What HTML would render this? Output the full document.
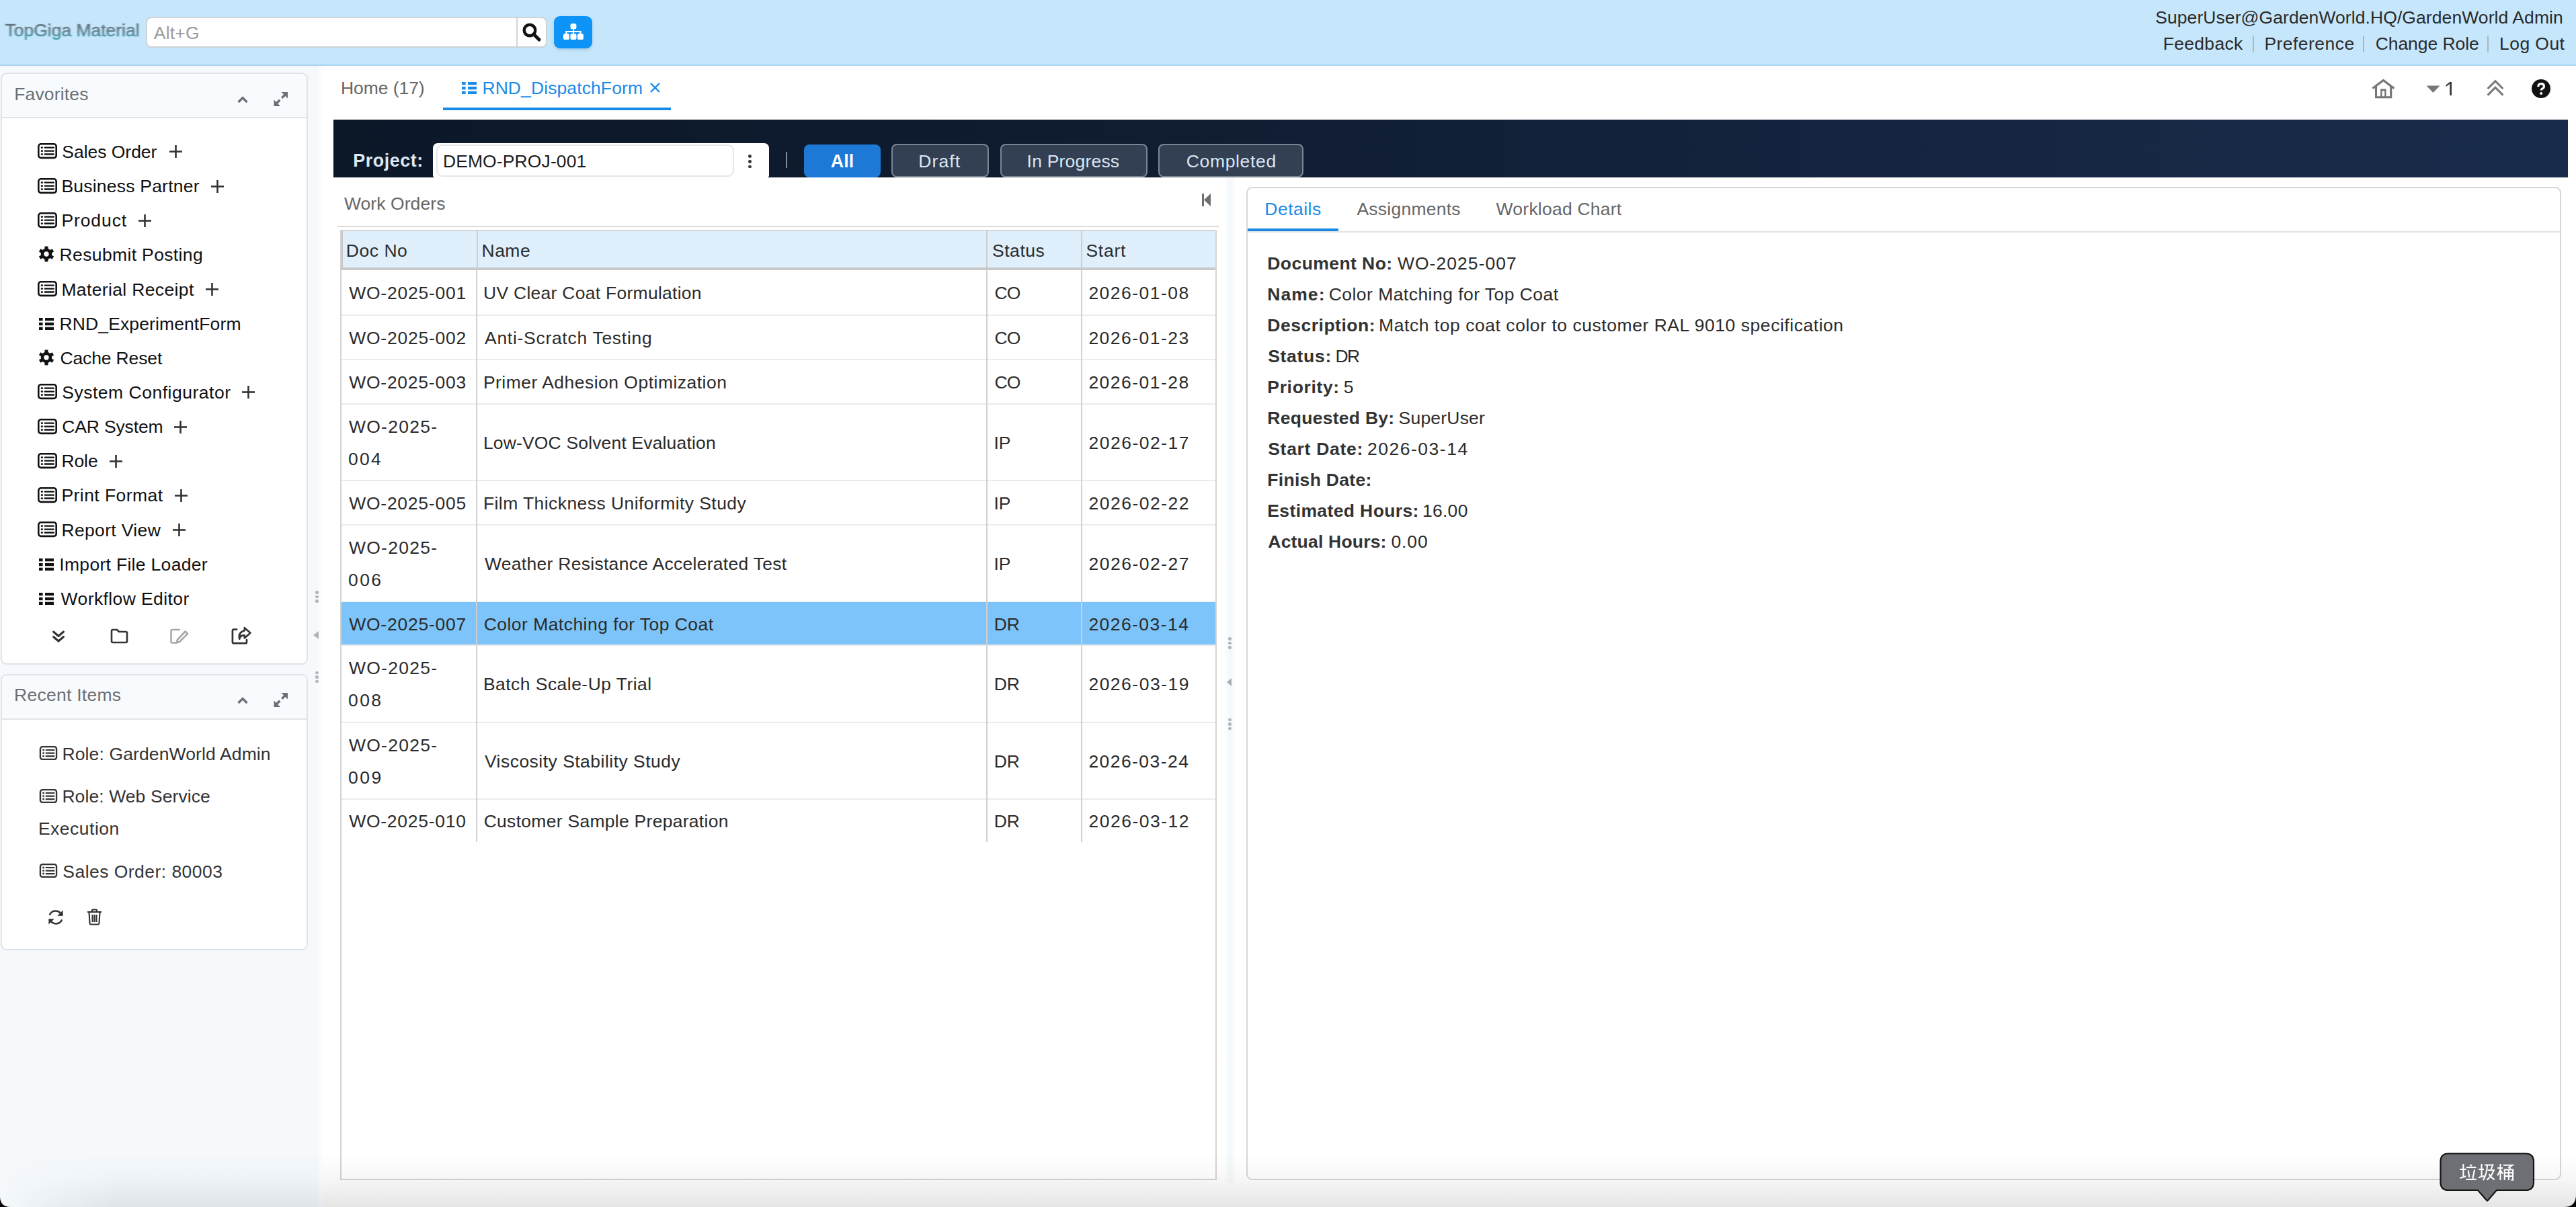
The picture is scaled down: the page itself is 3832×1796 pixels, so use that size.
<!DOCTYPE html><html><head><meta charset="utf-8"><style>
html,body{margin:0;padding:0;width:3832px;height:1796px;overflow:hidden;background:#fff;position:relative}
body{font-family:"Liberation Sans",sans-serif}
.t{position:absolute;line-height:1;white-space:nowrap}
</style></head><body>
<div style="position:absolute;left:0px;top:0px;width:3832px;height:96px;background:#c6e7fb"></div>
<div style="position:absolute;left:0px;top:96px;width:3832px;height:2px;background:#a9d5f4"></div>
<svg style="position:absolute;left:0;top:20px" width="216" height="50" viewBox="0 20 216 50"><defs><linearGradient id="lg" x1="0" y1="0" x2="0" y2="1"><stop offset="0" stop-color="#5e666b"/><stop offset="0.5" stop-color="#587680"/><stop offset="1" stop-color="#3aa0b4"/></linearGradient><filter id="bl" x="-5%" y="-30%" width="110%" height="160%"><feGaussianBlur stdDeviation="0.9 0.7"/></filter></defs><text x="7.6" y="54.3" font-family="Liberation Sans" font-size="25.6" font-weight="normal" fill="url(#lg)" stroke="url(#lg)" stroke-width="0.55" textLength="200" lengthAdjust="spacingAndGlyphs" filter="url(#bl)" opacity="0.95">TopGiga Material</text></svg>
<div style="position:absolute;left:217px;top:25px;width:597px;height:46px;box-sizing:border-box;border:2px solid #cdd2d6;border-radius:8px;background:#fff"></div>
<div style="position:absolute;left:768px;top:27px;width:2px;height:42px;background:#d4d4d4"></div>
<div class="t" style="left:228.8px;top:35.5px;font-size:26.5px;color:#9b9b9b;font-weight:normal;letter-spacing:0.19px;">Alt+G</div>
<svg style="position:absolute;left:776px;top:33px;" width="30" height="30" viewBox="0 0 30 30"><circle cx="12" cy="12" r="8.3" fill="none" stroke="#111" stroke-width="4.4"/><line x1="18" y1="18" x2="26" y2="26" stroke="#111" stroke-width="5" stroke-linecap="round"/></svg>
<div style="position:absolute;left:824px;top:24px;width:57px;height:48px;border-radius:9px;background:#0e93f6;box-shadow:0 2px 5px rgba(0,60,120,.18)"></div>
<svg style="position:absolute;left:838px;top:35px;" width="30" height="25" viewBox="0 0 30 25"><g fill="#fff"><rect x="10.6" y="0" width="8.8" height="8.3" rx="2.6"/><rect x="14" y="7" width="2" height="5"/><rect x="3.5" y="11" width="23" height="2"/><rect x="3.5" y="11" width="2" height="5"/><rect x="14" y="11" width="2" height="5"/><rect x="24.5" y="11" width="2" height="5"/><rect x="0" y="15" width="9" height="9" rx="2.6"/><rect x="10.5" y="15" width="9" height="9" rx="2.6"/><rect x="21" y="15" width="9" height="9" rx="2.6"/></g></svg>
<div class="t" style="left:3206.2px;top:13.0px;font-size:26.5px;color:#2a2a2a;font-weight:normal;letter-spacing:0.08px;">SuperUser@GardenWorld.HQ/GardenWorld Admin</div>
<div class="t" style="left:3217.7px;top:52.3px;font-size:26.5px;color:#2a2a2a;font-weight:normal;letter-spacing:0.31px;">Feedback</div>
<div class="t" style="left:3368.4px;top:52.3px;font-size:26.5px;color:#2a2a2a;font-weight:normal;letter-spacing:0.46px;">Preference</div>
<div class="t" style="left:3533.7px;top:52.3px;font-size:26.5px;color:#2a2a2a;font-weight:normal;letter-spacing:-0.06px;">Change Role</div>
<div class="t" style="left:3718.1px;top:52.3px;font-size:26.5px;color:#2a2a2a;font-weight:normal;letter-spacing:0.42px;">Log Out</div>
<div style="position:absolute;left:3350.8px;top:53px;width:2.0px;height:25px;background:#aeb6bd"></div>
<div style="position:absolute;left:3514.9px;top:53px;width:2.0px;height:25px;background:#aeb6bd"></div>
<div style="position:absolute;left:3700px;top:53px;width:2px;height:25px;background:#aeb6bd"></div>
<div style="position:absolute;left:0px;top:98px;width:481px;height:1698px;background:linear-gradient(90deg,#f5f9fc 0px,#f5f9fc 470px,#fafcfe 476px,#fff 482px)"></div>
<div style="position:absolute;left:1px;top:108px;width:457px;height:881px;box-sizing:border-box;border:2px solid #dfe3e7;border-radius:9px;background:#fff;overflow:hidden"><div style="height:64px;background:#f8fbfd;border-bottom:2px solid #e1e5e8"></div></div>
<div class="t" style="left:21.2px;top:127.1px;font-size:26.5px;color:#6b6f73;font-weight:normal;letter-spacing:0.17px;">Favorites</div>
<svg style="position:absolute;left:352px;top:140px;" width="18" height="16" viewBox="0 0 18 16"><polyline points="2.5,12 9,5.5 15.5,12" fill="none" stroke="#6b6f73" stroke-width="3.3"/></svg>
<svg style="position:absolute;left:407px;top:137px;" width="21" height="21" viewBox="0 0 21 21"><g fill="#6b6f73"><polygon points="21,0 21,9.5 11.5,0"/><polygon points="0.5,21 10,21 0.5,11.5"/></g><g stroke="#6b6f73" stroke-width="3.4"><line x1="17" y1="4" x2="12.2" y2="8.8"/><line x1="4.5" y1="16.5" x2="9.3" y2="11.7"/></g></svg>
<svg style="position:absolute;left:56px;top:213px;" width="29" height="24" viewBox="0 0 29 24"><rect x="1.3" y="1.3" width="26.4" height="20.6" rx="3.6" fill="none" stroke="#111" stroke-width="2.6"/><g fill="#111"><circle cx="6.4" cy="6.6" r="1.6"/><circle cx="6.4" cy="11.6" r="1.6"/><circle cx="6.4" cy="16.5" r="1.6"/></g><g stroke="#111" stroke-width="2.4" stroke-linecap="round"><line x1="10.8" y1="6.6" x2="23.8" y2="6.6"/><line x1="10.8" y1="11.6" x2="23.8" y2="11.6"/><line x1="10.8" y1="16.5" x2="23.8" y2="16.5"/></g></svg>
<div class="t" style="left:92.3px;top:212.9px;font-size:26.5px;color:#111;font-weight:normal;letter-spacing:-0.03px;">Sales Order</div>
<svg style="position:absolute;left:252px;top:216px;" width="19" height="19" viewBox="0 0 19 19"><g stroke="#333" stroke-width="2.6"><line x1="9.5" y1="0" x2="9.5" y2="19"/><line x1="0" y1="9.5" x2="19" y2="9.5"/></g></svg>
<svg style="position:absolute;left:56px;top:265px;" width="29" height="24" viewBox="0 0 29 24"><rect x="1.3" y="1.3" width="26.4" height="20.6" rx="3.6" fill="none" stroke="#111" stroke-width="2.6"/><g fill="#111"><circle cx="6.4" cy="6.6" r="1.6"/><circle cx="6.4" cy="11.6" r="1.6"/><circle cx="6.4" cy="16.5" r="1.6"/></g><g stroke="#111" stroke-width="2.4" stroke-linecap="round"><line x1="10.8" y1="6.6" x2="23.8" y2="6.6"/><line x1="10.8" y1="11.6" x2="23.8" y2="11.6"/><line x1="10.8" y1="16.5" x2="23.8" y2="16.5"/></g></svg>
<div class="t" style="left:91.4px;top:264.0px;font-size:26.5px;color:#111;font-weight:normal;letter-spacing:0.22px;">Business Partner</div>
<svg style="position:absolute;left:314px;top:268px;" width="19" height="19" viewBox="0 0 19 19"><g stroke="#333" stroke-width="2.6"><line x1="9.5" y1="0" x2="9.5" y2="19"/><line x1="0" y1="9.5" x2="19" y2="9.5"/></g></svg>
<svg style="position:absolute;left:56px;top:316px;" width="29" height="24" viewBox="0 0 29 24"><rect x="1.3" y="1.3" width="26.4" height="20.6" rx="3.6" fill="none" stroke="#111" stroke-width="2.6"/><g fill="#111"><circle cx="6.4" cy="6.6" r="1.6"/><circle cx="6.4" cy="11.6" r="1.6"/><circle cx="6.4" cy="16.5" r="1.6"/></g><g stroke="#111" stroke-width="2.4" stroke-linecap="round"><line x1="10.8" y1="6.6" x2="23.8" y2="6.6"/><line x1="10.8" y1="11.6" x2="23.8" y2="11.6"/><line x1="10.8" y1="16.5" x2="23.8" y2="16.5"/></g></svg>
<div class="t" style="left:91.4px;top:315.2px;font-size:26.5px;color:#111;font-weight:normal;letter-spacing:0.91px;">Product</div>
<svg style="position:absolute;left:206px;top:319px;" width="19" height="19" viewBox="0 0 19 19"><g stroke="#333" stroke-width="2.6"><line x1="9.5" y1="0" x2="9.5" y2="19"/><line x1="0" y1="9.5" x2="19" y2="9.5"/></g></svg>
<svg style="position:absolute;left:57px;top:366px;" width="24" height="24" viewBox="0 0 24 24"><circle cx="12" cy="12" r="8.3" fill="#111"/><rect x="9.5" y="0.5999999999999996" width="5" height="6" fill="#111" transform="rotate(0 12 12)"/><rect x="9.5" y="0.5999999999999996" width="5" height="6" fill="#111" transform="rotate(60 12 12)"/><rect x="9.5" y="0.5999999999999996" width="5" height="6" fill="#111" transform="rotate(120 12 12)"/><rect x="9.5" y="0.5999999999999996" width="5" height="6" fill="#111" transform="rotate(180 12 12)"/><rect x="9.5" y="0.5999999999999996" width="5" height="6" fill="#111" transform="rotate(240 12 12)"/><rect x="9.5" y="0.5999999999999996" width="5" height="6" fill="#111" transform="rotate(300 12 12)"/><circle cx="12" cy="12" r="3.7" fill="#fff"/></svg>
<div class="t" style="left:88.6px;top:366.3px;font-size:26.5px;color:#111;font-weight:normal;letter-spacing:0.36px;">Resubmit Posting</div>
<svg style="position:absolute;left:56px;top:418px;" width="29" height="24" viewBox="0 0 29 24"><rect x="1.3" y="1.3" width="26.4" height="20.6" rx="3.6" fill="none" stroke="#111" stroke-width="2.6"/><g fill="#111"><circle cx="6.4" cy="6.6" r="1.6"/><circle cx="6.4" cy="11.6" r="1.6"/><circle cx="6.4" cy="16.5" r="1.6"/></g><g stroke="#111" stroke-width="2.4" stroke-linecap="round"><line x1="10.8" y1="6.6" x2="23.8" y2="6.6"/><line x1="10.8" y1="11.6" x2="23.8" y2="11.6"/><line x1="10.8" y1="16.5" x2="23.8" y2="16.5"/></g></svg>
<div class="t" style="left:91.4px;top:417.5px;font-size:26.5px;color:#111;font-weight:normal;letter-spacing:0.36px;">Material Receipt</div>
<svg style="position:absolute;left:306px;top:421px;" width="19" height="19" viewBox="0 0 19 19"><g stroke="#333" stroke-width="2.6"><line x1="9.5" y1="0" x2="9.5" y2="19"/><line x1="0" y1="9.5" x2="19" y2="9.5"/></g></svg>
<svg style="position:absolute;left:58px;top:473px;" width="22" height="18" viewBox="0 0 22 18"><g fill="#111"><rect x="0" y="0" width="5.6" height="4.3"/><rect x="0" y="6.9" width="5.6" height="4.3"/><rect x="0" y="13.7" width="5.6" height="4.3"/><rect x="9" y="0" width="13" height="4.3"/><rect x="9" y="6.9" width="13" height="4.3"/><rect x="9" y="13.7" width="13" height="4.3"/></g></svg>
<div class="t" style="left:88.6px;top:468.6px;font-size:26.5px;color:#111;font-weight:normal;letter-spacing:0.11px;">RND_ExperimentForm</div>
<svg style="position:absolute;left:57px;top:520px;" width="24" height="24" viewBox="0 0 24 24"><circle cx="12" cy="12" r="8.3" fill="#111"/><rect x="9.5" y="0.5999999999999996" width="5" height="6" fill="#111" transform="rotate(0 12 12)"/><rect x="9.5" y="0.5999999999999996" width="5" height="6" fill="#111" transform="rotate(60 12 12)"/><rect x="9.5" y="0.5999999999999996" width="5" height="6" fill="#111" transform="rotate(120 12 12)"/><rect x="9.5" y="0.5999999999999996" width="5" height="6" fill="#111" transform="rotate(180 12 12)"/><rect x="9.5" y="0.5999999999999996" width="5" height="6" fill="#111" transform="rotate(240 12 12)"/><rect x="9.5" y="0.5999999999999996" width="5" height="6" fill="#111" transform="rotate(300 12 12)"/><circle cx="12" cy="12" r="3.7" fill="#fff"/></svg>
<div class="t" style="left:89.4px;top:519.8px;font-size:26.5px;color:#111;font-weight:normal;letter-spacing:-0.13px;">Cache Reset</div>
<svg style="position:absolute;left:56px;top:571px;" width="29" height="24" viewBox="0 0 29 24"><rect x="1.3" y="1.3" width="26.4" height="20.6" rx="3.6" fill="none" stroke="#111" stroke-width="2.6"/><g fill="#111"><circle cx="6.4" cy="6.6" r="1.6"/><circle cx="6.4" cy="11.6" r="1.6"/><circle cx="6.4" cy="16.5" r="1.6"/></g><g stroke="#111" stroke-width="2.4" stroke-linecap="round"><line x1="10.8" y1="6.6" x2="23.8" y2="6.6"/><line x1="10.8" y1="11.6" x2="23.8" y2="11.6"/><line x1="10.8" y1="16.5" x2="23.8" y2="16.5"/></g></svg>
<div class="t" style="left:92.3px;top:570.9px;font-size:26.5px;color:#111;font-weight:normal;letter-spacing:0.51px;">System Configurator</div>
<svg style="position:absolute;left:360px;top:574px;" width="19" height="19" viewBox="0 0 19 19"><g stroke="#333" stroke-width="2.6"><line x1="9.5" y1="0" x2="9.5" y2="19"/><line x1="0" y1="9.5" x2="19" y2="9.5"/></g></svg>
<svg style="position:absolute;left:56px;top:623px;" width="29" height="24" viewBox="0 0 29 24"><rect x="1.3" y="1.3" width="26.4" height="20.6" rx="3.6" fill="none" stroke="#111" stroke-width="2.6"/><g fill="#111"><circle cx="6.4" cy="6.6" r="1.6"/><circle cx="6.4" cy="11.6" r="1.6"/><circle cx="6.4" cy="16.5" r="1.6"/></g><g stroke="#111" stroke-width="2.4" stroke-linecap="round"><line x1="10.8" y1="6.6" x2="23.8" y2="6.6"/><line x1="10.8" y1="11.6" x2="23.8" y2="11.6"/><line x1="10.8" y1="16.5" x2="23.8" y2="16.5"/></g></svg>
<div class="t" style="left:92.2px;top:622.1px;font-size:26.5px;color:#111;font-weight:normal;letter-spacing:-0.14px;">CAR System</div>
<svg style="position:absolute;left:259px;top:626px;" width="19" height="19" viewBox="0 0 19 19"><g stroke="#333" stroke-width="2.6"><line x1="9.5" y1="0" x2="9.5" y2="19"/><line x1="0" y1="9.5" x2="19" y2="9.5"/></g></svg>
<svg style="position:absolute;left:56px;top:674px;" width="29" height="24" viewBox="0 0 29 24"><rect x="1.3" y="1.3" width="26.4" height="20.6" rx="3.6" fill="none" stroke="#111" stroke-width="2.6"/><g fill="#111"><circle cx="6.4" cy="6.6" r="1.6"/><circle cx="6.4" cy="11.6" r="1.6"/><circle cx="6.4" cy="16.5" r="1.6"/></g><g stroke="#111" stroke-width="2.4" stroke-linecap="round"><line x1="10.8" y1="6.6" x2="23.8" y2="6.6"/><line x1="10.8" y1="11.6" x2="23.8" y2="11.6"/><line x1="10.8" y1="16.5" x2="23.8" y2="16.5"/></g></svg>
<div class="t" style="left:91.4px;top:673.2px;font-size:26.5px;color:#111;font-weight:normal;letter-spacing:-0.09px;">Role</div>
<svg style="position:absolute;left:163px;top:677px;" width="19" height="19" viewBox="0 0 19 19"><g stroke="#333" stroke-width="2.6"><line x1="9.5" y1="0" x2="9.5" y2="19"/><line x1="0" y1="9.5" x2="19" y2="9.5"/></g></svg>
<svg style="position:absolute;left:56px;top:725px;" width="29" height="24" viewBox="0 0 29 24"><rect x="1.3" y="1.3" width="26.4" height="20.6" rx="3.6" fill="none" stroke="#111" stroke-width="2.6"/><g fill="#111"><circle cx="6.4" cy="6.6" r="1.6"/><circle cx="6.4" cy="11.6" r="1.6"/><circle cx="6.4" cy="16.5" r="1.6"/></g><g stroke="#111" stroke-width="2.4" stroke-linecap="round"><line x1="10.8" y1="6.6" x2="23.8" y2="6.6"/><line x1="10.8" y1="11.6" x2="23.8" y2="11.6"/><line x1="10.8" y1="16.5" x2="23.8" y2="16.5"/></g></svg>
<div class="t" style="left:91.4px;top:724.4px;font-size:26.5px;color:#111;font-weight:normal;letter-spacing:0.45px;">Print Format</div>
<svg style="position:absolute;left:260px;top:728px;" width="19" height="19" viewBox="0 0 19 19"><g stroke="#333" stroke-width="2.6"><line x1="9.5" y1="0" x2="9.5" y2="19"/><line x1="0" y1="9.5" x2="19" y2="9.5"/></g></svg>
<svg style="position:absolute;left:56px;top:776px;" width="29" height="24" viewBox="0 0 29 24"><rect x="1.3" y="1.3" width="26.4" height="20.6" rx="3.6" fill="none" stroke="#111" stroke-width="2.6"/><g fill="#111"><circle cx="6.4" cy="6.6" r="1.6"/><circle cx="6.4" cy="11.6" r="1.6"/><circle cx="6.4" cy="16.5" r="1.6"/></g><g stroke="#111" stroke-width="2.4" stroke-linecap="round"><line x1="10.8" y1="6.6" x2="23.8" y2="6.6"/><line x1="10.8" y1="11.6" x2="23.8" y2="11.6"/><line x1="10.8" y1="16.5" x2="23.8" y2="16.5"/></g></svg>
<div class="t" style="left:91.4px;top:775.5px;font-size:26.5px;color:#111;font-weight:normal;letter-spacing:0.36px;">Report View</div>
<svg style="position:absolute;left:257px;top:779px;" width="19" height="19" viewBox="0 0 19 19"><g stroke="#333" stroke-width="2.6"><line x1="9.5" y1="0" x2="9.5" y2="19"/><line x1="0" y1="9.5" x2="19" y2="9.5"/></g></svg>
<svg style="position:absolute;left:58px;top:831px;" width="22" height="18" viewBox="0 0 22 18"><g fill="#111"><rect x="0" y="0" width="5.6" height="4.3"/><rect x="0" y="6.9" width="5.6" height="4.3"/><rect x="0" y="13.7" width="5.6" height="4.3"/><rect x="9" y="0" width="13" height="4.3"/><rect x="9" y="6.9" width="13" height="4.3"/><rect x="9" y="13.7" width="13" height="4.3"/></g></svg>
<div class="t" style="left:88.3px;top:826.7px;font-size:26.5px;color:#111;font-weight:normal;letter-spacing:0.31px;">Import File Loader</div>
<svg style="position:absolute;left:58px;top:882px;" width="22" height="18" viewBox="0 0 22 18"><g fill="#111"><rect x="0" y="0" width="5.6" height="4.3"/><rect x="0" y="6.9" width="5.6" height="4.3"/><rect x="0" y="13.7" width="5.6" height="4.3"/><rect x="9" y="0" width="13" height="4.3"/><rect x="9" y="6.9" width="13" height="4.3"/><rect x="9" y="13.7" width="13" height="4.3"/></g></svg>
<div class="t" style="left:90.6px;top:877.8px;font-size:26.5px;color:#111;font-weight:normal;letter-spacing:0.40px;">Workflow Editor</div>
<svg style="position:absolute;left:77px;top:937px;" width="20" height="20" viewBox="0 0 20 20"><g fill="none" stroke="#333" stroke-width="3" stroke-linecap="round" stroke-linejoin="round"><polyline points="2.5,3 10,9.5 17.5,3"/><polyline points="2.5,10.5 10,17 17.5,10.5"/></g></svg>
<svg style="position:absolute;left:164px;top:935px;" width="27" height="23" viewBox="0 0 27 23"><path d="M2,4 Q2,2 4,2 L10,2 L13,5 L23,5 Q25,5 25,7 L25,19 Q25,21 23,21 L4,21 Q2,21 2,19 Z" fill="none" stroke="#333" stroke-width="2.6" stroke-linejoin="round"/></svg>
<svg style="position:absolute;left:253px;top:935px;" width="28" height="24" viewBox="0 0 28 24"><g fill="none" stroke="#a8a8a8" stroke-width="2.6" stroke-linejoin="round"><path d="M15,2 L3,2 Q1.5,2 1.5,3.5 L1.5,20 Q1.5,21.5 3,21.5 L9,21.5"/><path d="M22.5,4.5 L26,8 L14,20 L9.5,21.5 L11,17 Z"/></g></svg>
<svg style="position:absolute;left:343px;top:932px;" width="33" height="28" viewBox="0 0 33 28"><g fill="none" stroke="#333" stroke-width="2.7" stroke-linejoin="round" stroke-linecap="round"><path d="M9.2,4.7 L4.9,4.7 Q2.9,4.7 2.9,6.7 L2.9,23.2 Q2.9,25.2 4.9,25.2 L22,25.2 Q24,25.2 24,23.2 L24,20"/><path d="M20.8,6.2 L20.8,2.2 L29.4,9.8 L20.8,17.4 L20.8,13.4 Q14.5,13 13.2,18.6 Q11,9 20.8,6.2 Z"/></g></svg>
<div style="position:absolute;left:469.20px;top:879.20px;width:4.6px;height:4.6px;border-radius:50%;background:#b0b4b8"></div><div style="position:absolute;left:469.20px;top:885.60px;width:4.6px;height:4.6px;border-radius:50%;background:#b0b4b8"></div><div style="position:absolute;left:469.20px;top:892.00px;width:4.6px;height:4.6px;border-radius:50%;background:#b0b4b8"></div>
<svg style="position:absolute;left:466px;top:939px;" width="8" height="12" viewBox="0 0 8 12"><polygon points="8,0 0,6 8,12" fill="#b0b4b8"/></svg>
<div style="position:absolute;left:469.20px;top:998.70px;width:4.6px;height:4.6px;border-radius:50%;background:#b0b4b8"></div><div style="position:absolute;left:469.20px;top:1005.10px;width:4.6px;height:4.6px;border-radius:50%;background:#b0b4b8"></div><div style="position:absolute;left:469.20px;top:1011.50px;width:4.6px;height:4.6px;border-radius:50%;background:#b0b4b8"></div>
<div style="position:absolute;left:1px;top:1003px;width:457px;height:411px;box-sizing:border-box;border:2px solid #dfe3e7;border-radius:9px;background:#fff;overflow:hidden"><div style="height:64px;background:#f8fbfd;border-bottom:2px solid #e1e5e8"></div></div>
<div class="t" style="left:21.1px;top:1021.0px;font-size:26.5px;color:#6b6f73;font-weight:normal;letter-spacing:0.25px;">Recent Items</div>
<svg style="position:absolute;left:352px;top:1034px;" width="18" height="16" viewBox="0 0 18 16"><polyline points="2.5,12 9,5.5 15.5,12" fill="none" stroke="#6b6f73" stroke-width="3.3"/></svg>
<svg style="position:absolute;left:407px;top:1031px;" width="21" height="21" viewBox="0 0 21 21"><g fill="#6b6f73"><polygon points="21,0 21,9.5 11.5,0"/><polygon points="0.5,21 10,21 0.5,11.5"/></g><g stroke="#6b6f73" stroke-width="3.4"><line x1="17" y1="4" x2="12.2" y2="8.8"/><line x1="4.5" y1="16.5" x2="9.3" y2="11.7"/></g></svg>
<svg style="position:absolute;left:58px;top:1110px;" width="28" height="21" viewBox="0 0 29 23"><rect x="1.3" y="1.3" width="26.4" height="20.6" rx="3.6" fill="none" stroke="#333" stroke-width="2.6"/><g fill="#333"><circle cx="6.4" cy="6.6" r="1.6"/><circle cx="6.4" cy="11.6" r="1.6"/><circle cx="6.4" cy="16.5" r="1.6"/></g><g stroke="#333" stroke-width="2.4" stroke-linecap="round"><line x1="10.8" y1="6.6" x2="23.8" y2="6.6"/><line x1="10.8" y1="11.6" x2="23.8" y2="11.6"/><line x1="10.8" y1="16.5" x2="23.8" y2="16.5"/></g></svg>
<div class="t" style="left:92.4px;top:1109.0px;font-size:26.5px;color:#333;font-weight:normal;letter-spacing:0.13px;">Role: GardenWorld Admin</div>
<svg style="position:absolute;left:58px;top:1174px;" width="28" height="21" viewBox="0 0 29 23"><rect x="1.3" y="1.3" width="26.4" height="20.6" rx="3.6" fill="none" stroke="#333" stroke-width="2.6"/><g fill="#333"><circle cx="6.4" cy="6.6" r="1.6"/><circle cx="6.4" cy="11.6" r="1.6"/><circle cx="6.4" cy="16.5" r="1.6"/></g><g stroke="#333" stroke-width="2.4" stroke-linecap="round"><line x1="10.8" y1="6.6" x2="23.8" y2="6.6"/><line x1="10.8" y1="11.6" x2="23.8" y2="11.6"/><line x1="10.8" y1="16.5" x2="23.8" y2="16.5"/></g></svg>
<div class="t" style="left:92.4px;top:1172.0px;font-size:26.5px;color:#333;font-weight:normal;letter-spacing:0.09px;">Role: Web Service</div>
<div class="t" style="left:56.9px;top:1220.0px;font-size:26.5px;color:#333;font-weight:normal;letter-spacing:0.51px;">Execution</div>
<svg style="position:absolute;left:58px;top:1285px;" width="28" height="21" viewBox="0 0 29 23"><rect x="1.3" y="1.3" width="26.4" height="20.6" rx="3.6" fill="none" stroke="#333" stroke-width="2.6"/><g fill="#333"><circle cx="6.4" cy="6.6" r="1.6"/><circle cx="6.4" cy="11.6" r="1.6"/><circle cx="6.4" cy="16.5" r="1.6"/></g><g stroke="#333" stroke-width="2.4" stroke-linecap="round"><line x1="10.8" y1="6.6" x2="23.8" y2="6.6"/><line x1="10.8" y1="11.6" x2="23.8" y2="11.6"/><line x1="10.8" y1="16.5" x2="23.8" y2="16.5"/></g></svg>
<div class="t" style="left:93.3px;top:1283.6px;font-size:26.5px;color:#333;font-weight:normal;letter-spacing:0.46px;">Sales Order: 80003</div>
<svg style="position:absolute;left:69px;top:1351px;" width="28" height="28" viewBox="0 0 28 28"><g fill="none" stroke="#333" stroke-width="2.5" stroke-linecap="round"><path d="M22.5,10.5 A9.6,9.6 0 0 0 5.2,9.6"/><path d="M5.5,17.5 A9.6,9.6 0 0 0 22.8,18.4"/></g><g fill="#333"><polygon points="24.6,3.4 24.6,11.8 16.2,11.8"/><polygon points="3.4,24.6 3.4,16.2 11.8,16.2"/></g></svg>
<svg style="position:absolute;left:129px;top:1352px;" width="23" height="25" viewBox="0 0 23 25"><g fill="none" stroke="#333" stroke-width="2.1"><path d="M1,5 L22,5"/><path d="M8,5 L8,2.5 Q8,1.5 9,1.5 L14,1.5 Q15,1.5 15,2.5 L15,5"/><path d="M3.5,5 L4.5,22 Q4.6,23.5 6,23.5 L17,23.5 Q18.4,23.5 18.5,22 L19.5,5"/><line x1="8.5" y1="9" x2="8.5" y2="20"/><line x1="11.5" y1="9" x2="11.5" y2="20"/><line x1="14.5" y1="9" x2="14.5" y2="20"/></g></svg>
<div class="t" style="left:506.9px;top:118.0px;font-size:26.5px;color:#666;font-weight:normal;letter-spacing:-0.05px;">Home (17)</div>
<svg style="position:absolute;left:687px;top:122px;" width="22" height="18" viewBox="0 0 22 18"><g fill="#1a8ae8"><rect x="0" y="0" width="5.6" height="4.3"/><rect x="0" y="6.9" width="5.6" height="4.3"/><rect x="0" y="13.7" width="5.6" height="4.3"/><rect x="9" y="0" width="13" height="4.3"/><rect x="9" y="6.9" width="13" height="4.3"/><rect x="9" y="13.7" width="13" height="4.3"/></g></svg>
<div class="t" style="left:717.4px;top:118.0px;font-size:26.5px;color:#1a8ae8;font-weight:normal;letter-spacing:0.10px;">RND_DispatchForm</div>
<svg style="position:absolute;left:967px;top:123px;" width="15" height="15" viewBox="0 0 15 15"><g stroke="#1a8ae8" stroke-width="2.4"><line x1="1" y1="1" x2="14" y2="14"/><line x1="14" y1="1" x2="1" y2="14"/></g></svg>
<div style="position:absolute;left:659px;top:160px;width:339px;height:4px;background:#1a8ae8"></div>
<svg style="position:absolute;left:3525px;top:114px;" width="40" height="36" viewBox="0 0 40 36"><g fill="none" stroke="#757575" stroke-width="3.1" stroke-linejoin="miter"><polyline points="4.4,17.6 20.4,5.4 36.4,17.6"/><polyline points="9.5,14 9.5,30.7 31.7,30.7 31.7,14"/></g><path d="M16.2,18.2 L24.6,18.2 L24.6,29.8 L22.2,29.8 L22.2,21.2 L18.6,21.2 L18.6,29.8 L16.2,29.8 Z" fill="#757575"/></svg>
<svg style="position:absolute;left:3608px;top:126px;" width="23" height="13" viewBox="0 0 23 13"><polygon points="1.5,1.4 21.5,1.4 11.5,12" fill="#777"/></svg>
<svg style="position:absolute;left:3634px;top:118px;" width="16" height="26" viewBox="0 0 16 26"><path d="M11.6,3.9 L11.6,23.9" stroke="#333" stroke-width="2.7" fill="none"/><path d="M12.9,3.9 L10.4,3.9 L4.5,8.4 L4.5,11 L10.4,6.8 Z" fill="#333"/></svg>
<svg style="position:absolute;left:3697px;top:116px;" width="30" height="30" viewBox="0 0 30 30"><g fill="none" stroke="#777" stroke-width="3"><polyline points="3.6,16 15,4.6 26.4,16"/><polyline points="3.6,25.6 15,14.2 26.4,25.6"/></g></svg>
<svg style="position:absolute;left:3766px;top:118px;" width="28" height="28" viewBox="0 0 28 28"><circle cx="14" cy="14" r="14" fill="#111"/><path d="M9.8,11 Q9.8,6.6 14.2,6.6 Q18.4,6.6 18.4,10.4 Q18.4,12.8 15.8,14 Q14.3,14.8 14.3,16.6" fill="none" stroke="#fff" stroke-width="3.2"/><circle cx="14.2" cy="21" r="2" fill="#fff"/></svg>
<div style="position:absolute;left:496px;top:178px;width:3324px;height:86px;background:linear-gradient(90deg,#0c1828 0%,#0f1c31 35%,#1a2c4c 100%)"></div>
<div class="t" style="left:525.3px;top:226.4px;font-size:26.8px;color:#dfe8f3;font-weight:bold;letter-spacing:0.59px;">Project:</div>
<div style="position:absolute;left:644px;top:213px;width:500px;height:51px;background:#fff;border-radius:7px 7px 3px 3px"></div>
<div style="position:absolute;left:649px;top:215px;width:443px;height:48px;box-sizing:border-box;border:2px solid #e4e6e8;border-radius:9px;background:#fff"></div>
<div class="t" style="left:658.9px;top:227.0px;font-size:26.5px;color:#1b1b1b;font-weight:normal;letter-spacing:0.11px;">DEMO-PROJ-001</div>
<div style="position:absolute;left:1113.10px;top:230.40px;width:4.8px;height:4.8px;border-radius:50%;background:#333"></div><div style="position:absolute;left:1113.10px;top:237.95px;width:4.8px;height:4.8px;border-radius:50%;background:#333"></div><div style="position:absolute;left:1113.10px;top:245.50px;width:4.8px;height:4.8px;border-radius:50%;background:#333"></div>
<div style="position:absolute;left:1169px;top:226px;width:2px;height:24px;background:#8591a0"></div>
<div style="position:absolute;left:1196px;top:215px;width:114px;height:49px;border-radius:8px;background:#1e78d5"></div>
<div style="position:absolute;left:1326px;top:214px;width:145px;height:50px;box-sizing:border-box;border:2px solid #7b8594;border-radius:8px;background:#333f52"></div>
<div style="position:absolute;left:1488px;top:214px;width:219px;height:50px;box-sizing:border-box;border:2px solid #7b8594;border-radius:8px;background:#333f52"></div>
<div style="position:absolute;left:1723px;top:214px;width:216px;height:50px;box-sizing:border-box;border:2px solid #7b8594;border-radius:8px;background:#333f52"></div>
<div class="t" style="left:1235.7px;top:226.7px;font-size:26.8px;color:#fff;font-weight:bold;letter-spacing:0.12px;">All</div>
<div class="t" style="left:1366.3px;top:227.0px;font-size:26.5px;color:#dce6f3;font-weight:normal;letter-spacing:1.12px;">Draft</div>
<div class="t" style="left:1527.6px;top:227.0px;font-size:26.5px;color:#dce6f3;font-weight:normal;letter-spacing:0.20px;">In Progress</div>
<div class="t" style="left:1764.7px;top:227.0px;font-size:26.5px;color:#dce6f3;font-weight:normal;letter-spacing:0.67px;">Completed</div>
<div class="t" style="left:511.9px;top:289.8px;font-size:26.5px;color:#666;font-weight:normal;letter-spacing:0.08px;">Work Orders</div>
<svg style="position:absolute;left:1788px;top:288px;" width="13" height="19" viewBox="0 0 13 19"><rect x="0" y="0" width="3" height="19" fill="#6f6f6f"/><polygon points="13,0 3,9.5 13,19" fill="#6f6f6f"/></svg>
<div style="position:absolute;left:502px;top:336px;width:1312px;height:2px;background:#dadada"></div>
<div style="position:absolute;left:506px;top:342px;width:1304px;height:1414px;box-sizing:border-box;border:2px solid #d3d3d3;background:#fff"></div>
<div style="position:absolute;left:508px;top:344px;width:1300px;height:54px;background:#dff0fc"></div>
<div style="position:absolute;left:508px;top:398px;width:1300px;height:4px;background:#c8c8c8"></div>
<div style="position:absolute;left:508px;top:344px;width:2px;height:54px;background:#c8c8c8"></div>
<div style="position:absolute;left:709px;top:344px;width:2px;height:54px;background:#cfcfcf"></div>
<div style="position:absolute;left:1467px;top:344px;width:2px;height:54px;background:#cfcfcf"></div>
<div style="position:absolute;left:1608px;top:344px;width:2px;height:54px;background:#cfcfcf"></div>
<div class="t" style="left:514.7px;top:359.6px;font-size:26.5px;color:#2b2b2b;font-weight:normal;letter-spacing:0.56px;">Doc No</div>
<div class="t" style="left:716.6px;top:359.6px;font-size:26.5px;color:#2b2b2b;font-weight:normal;letter-spacing:0.45px;">Name</div>
<div class="t" style="left:1476.0px;top:359.6px;font-size:26.5px;color:#2b2b2b;font-weight:normal;letter-spacing:0.54px;">Status</div>
<div class="t" style="left:1615.4px;top:359.6px;font-size:26.5px;color:#2b2b2b;font-weight:normal;letter-spacing:0.75px;">Start</div>
<div style="position:absolute;left:508px;top:468px;width:1300px;height:2px;background:#ebebeb"></div>
<div style="position:absolute;left:708px;top:402px;width:2px;height:67px;background:#d0d0d0"></div>
<div style="position:absolute;left:1467px;top:402px;width:2px;height:67px;background:#d0d0d0"></div>
<div style="position:absolute;left:1608px;top:402px;width:2px;height:67px;background:#d0d0d0"></div>
<div class="t" style="left:519.2px;top:423.3px;font-size:26.5px;color:#2b2b2b;font-weight:normal;letter-spacing:0.76px;">WO-2025-001</div>
<div class="t" style="left:719.0px;top:423.3px;font-size:26.5px;color:#2b2b2b;font-weight:normal;letter-spacing:0.27px;">UV Clear Coat Formulation</div>
<div class="t" style="left:1479.5px;top:423.3px;font-size:26.5px;color:#2b2b2b;font-weight:normal;letter-spacing:-1.00px;">CO</div>
<div class="t" style="left:1619.4px;top:423.3px;font-size:26.5px;color:#2b2b2b;font-weight:normal;letter-spacing:1.48px;">2026-01-08</div>
<div style="position:absolute;left:508px;top:534px;width:1300px;height:2px;background:#ebebeb"></div>
<div style="position:absolute;left:708px;top:469px;width:2px;height:66px;background:#d0d0d0"></div>
<div style="position:absolute;left:1467px;top:469px;width:2px;height:66px;background:#d0d0d0"></div>
<div style="position:absolute;left:1608px;top:469px;width:2px;height:66px;background:#d0d0d0"></div>
<div class="t" style="left:519.2px;top:489.8px;font-size:26.5px;color:#2b2b2b;font-weight:normal;letter-spacing:0.77px;">WO-2025-002</div>
<div class="t" style="left:721.0px;top:489.8px;font-size:26.5px;color:#2b2b2b;font-weight:normal;letter-spacing:0.71px;">Anti-Scratch Testing</div>
<div class="t" style="left:1479.5px;top:489.8px;font-size:26.5px;color:#2b2b2b;font-weight:normal;letter-spacing:-1.00px;">CO</div>
<div class="t" style="left:1619.4px;top:489.8px;font-size:26.5px;color:#2b2b2b;font-weight:normal;letter-spacing:1.48px;">2026-01-23</div>
<div style="position:absolute;left:508px;top:600px;width:1300px;height:2px;background:#ebebeb"></div>
<div style="position:absolute;left:708px;top:535px;width:2px;height:66px;background:#d0d0d0"></div>
<div style="position:absolute;left:1467px;top:535px;width:2px;height:66px;background:#d0d0d0"></div>
<div style="position:absolute;left:1608px;top:535px;width:2px;height:66px;background:#d0d0d0"></div>
<div class="t" style="left:519.2px;top:555.8px;font-size:26.5px;color:#2b2b2b;font-weight:normal;letter-spacing:0.75px;">WO-2025-003</div>
<div class="t" style="left:718.9px;top:555.8px;font-size:26.5px;color:#2b2b2b;font-weight:normal;letter-spacing:0.48px;">Primer Adhesion Optimization</div>
<div class="t" style="left:1479.5px;top:555.8px;font-size:26.5px;color:#2b2b2b;font-weight:normal;letter-spacing:-1.00px;">CO</div>
<div class="t" style="left:1619.4px;top:555.8px;font-size:26.5px;color:#2b2b2b;font-weight:normal;letter-spacing:1.48px;">2026-01-28</div>
<div style="position:absolute;left:508px;top:714px;width:1300px;height:2px;background:#ebebeb"></div>
<div style="position:absolute;left:708px;top:601px;width:2px;height:114px;background:#d0d0d0"></div>
<div style="position:absolute;left:1467px;top:601px;width:2px;height:114px;background:#d0d0d0"></div>
<div style="position:absolute;left:1608px;top:601px;width:2px;height:114px;background:#d0d0d0"></div>
<div class="t" style="left:519.0px;top:621.8px;font-size:26.5px;color:#2b2b2b;font-weight:normal;letter-spacing:1.25px;">WO-2025-</div>
<div class="t" style="left:517.9px;top:669.8px;font-size:26.5px;color:#2b2b2b;font-weight:normal;letter-spacing:2.30px;">004</div>
<div class="t" style="left:718.9px;top:645.8px;font-size:26.5px;color:#2b2b2b;font-weight:normal;letter-spacing:0.16px;">Low-VOC Solvent Evaluation</div>
<div class="t" style="left:1478.4px;top:645.8px;font-size:26.5px;color:#2b2b2b;font-weight:normal;letter-spacing:0.00px;">IP</div>
<div class="t" style="left:1619.4px;top:645.8px;font-size:26.5px;color:#2b2b2b;font-weight:normal;letter-spacing:1.51px;">2026-02-17</div>
<div style="position:absolute;left:508px;top:780px;width:1300px;height:2px;background:#ebebeb"></div>
<div style="position:absolute;left:708px;top:715px;width:2px;height:66px;background:#d0d0d0"></div>
<div style="position:absolute;left:1467px;top:715px;width:2px;height:66px;background:#d0d0d0"></div>
<div style="position:absolute;left:1608px;top:715px;width:2px;height:66px;background:#d0d0d0"></div>
<div class="t" style="left:519.2px;top:735.8px;font-size:26.5px;color:#2b2b2b;font-weight:normal;letter-spacing:0.75px;">WO-2025-005</div>
<div class="t" style="left:718.9px;top:735.8px;font-size:26.5px;color:#2b2b2b;font-weight:normal;letter-spacing:0.43px;">Film Thickness Uniformity Study</div>
<div class="t" style="left:1478.4px;top:735.8px;font-size:26.5px;color:#2b2b2b;font-weight:normal;letter-spacing:0.00px;">IP</div>
<div class="t" style="left:1619.4px;top:735.8px;font-size:26.5px;color:#2b2b2b;font-weight:normal;letter-spacing:1.51px;">2026-02-22</div>
<div style="position:absolute;left:508px;top:895px;width:1300px;height:2px;background:#ebebeb"></div>
<div style="position:absolute;left:708px;top:781px;width:2px;height:115px;background:#d0d0d0"></div>
<div style="position:absolute;left:1467px;top:781px;width:2px;height:115px;background:#d0d0d0"></div>
<div style="position:absolute;left:1608px;top:781px;width:2px;height:115px;background:#d0d0d0"></div>
<div class="t" style="left:519.0px;top:802.3px;font-size:26.5px;color:#2b2b2b;font-weight:normal;letter-spacing:1.25px;">WO-2025-</div>
<div class="t" style="left:517.9px;top:850.3px;font-size:26.5px;color:#2b2b2b;font-weight:normal;letter-spacing:2.50px;">006</div>
<div class="t" style="left:720.9px;top:826.3px;font-size:26.5px;color:#2b2b2b;font-weight:normal;letter-spacing:0.29px;">Weather Resistance Accelerated Test</div>
<div class="t" style="left:1478.4px;top:826.3px;font-size:26.5px;color:#2b2b2b;font-weight:normal;letter-spacing:0.00px;">IP</div>
<div class="t" style="left:1619.4px;top:826.3px;font-size:26.5px;color:#2b2b2b;font-weight:normal;letter-spacing:1.51px;">2026-02-27</div>
<div style="position:absolute;left:508px;top:896px;width:1300px;height:64px;background:#7cc4f9"></div>
<div style="position:absolute;left:508px;top:959px;width:1300px;height:2px;background:#ebebeb"></div>
<div style="position:absolute;left:708px;top:896px;width:2px;height:64px;background:#d0d0d0"></div>
<div style="position:absolute;left:1467px;top:896px;width:2px;height:64px;background:#d0d0d0"></div>
<div style="position:absolute;left:1608px;top:896px;width:2px;height:64px;background:#d0d0d0"></div>
<div class="t" style="left:519.2px;top:915.8px;font-size:26.5px;color:#2b2b2b;font-weight:normal;letter-spacing:0.77px;">WO-2025-007</div>
<div class="t" style="left:719.7px;top:915.8px;font-size:26.5px;color:#2b2b2b;font-weight:normal;letter-spacing:0.46px;">Color Matching for Top Coat</div>
<div class="t" style="left:1478.7px;top:915.8px;font-size:26.5px;color:#2b2b2b;font-weight:normal;letter-spacing:0.00px;">DR</div>
<div class="t" style="left:1619.4px;top:915.8px;font-size:26.5px;color:#2b2b2b;font-weight:normal;letter-spacing:1.44px;">2026-03-14</div>
<div style="position:absolute;left:508px;top:1074px;width:1300px;height:2px;background:#ebebeb"></div>
<div style="position:absolute;left:708px;top:960px;width:2px;height:115px;background:#d0d0d0"></div>
<div style="position:absolute;left:1467px;top:960px;width:2px;height:115px;background:#d0d0d0"></div>
<div style="position:absolute;left:1608px;top:960px;width:2px;height:115px;background:#d0d0d0"></div>
<div class="t" style="left:519.0px;top:981.3px;font-size:26.5px;color:#2b2b2b;font-weight:normal;letter-spacing:1.25px;">WO-2025-</div>
<div class="t" style="left:517.9px;top:1029.3px;font-size:26.5px;color:#2b2b2b;font-weight:normal;letter-spacing:2.50px;">008</div>
<div class="t" style="left:718.9px;top:1005.3px;font-size:26.5px;color:#2b2b2b;font-weight:normal;letter-spacing:0.46px;">Batch Scale-Up Trial</div>
<div class="t" style="left:1478.7px;top:1005.3px;font-size:26.5px;color:#2b2b2b;font-weight:normal;letter-spacing:0.00px;">DR</div>
<div class="t" style="left:1619.4px;top:1005.3px;font-size:26.5px;color:#2b2b2b;font-weight:normal;letter-spacing:1.50px;">2026-03-19</div>
<div style="position:absolute;left:508px;top:1188px;width:1300px;height:2px;background:#ebebeb"></div>
<div style="position:absolute;left:708px;top:1075px;width:2px;height:114px;background:#d0d0d0"></div>
<div style="position:absolute;left:1467px;top:1075px;width:2px;height:114px;background:#d0d0d0"></div>
<div style="position:absolute;left:1608px;top:1075px;width:2px;height:114px;background:#d0d0d0"></div>
<div class="t" style="left:519.0px;top:1095.8px;font-size:26.5px;color:#2b2b2b;font-weight:normal;letter-spacing:1.25px;">WO-2025-</div>
<div class="t" style="left:517.9px;top:1143.8px;font-size:26.5px;color:#2b2b2b;font-weight:normal;letter-spacing:2.56px;">009</div>
<div class="t" style="left:720.9px;top:1119.8px;font-size:26.5px;color:#2b2b2b;font-weight:normal;letter-spacing:0.48px;">Viscosity Stability Study</div>
<div class="t" style="left:1478.7px;top:1119.8px;font-size:26.5px;color:#2b2b2b;font-weight:normal;letter-spacing:0.00px;">DR</div>
<div class="t" style="left:1619.4px;top:1119.8px;font-size:26.5px;color:#2b2b2b;font-weight:normal;letter-spacing:1.44px;">2026-03-24</div>
<div style="position:absolute;left:708px;top:1189px;width:2px;height:64px;background:#d0d0d0"></div>
<div style="position:absolute;left:1467px;top:1189px;width:2px;height:64px;background:#d0d0d0"></div>
<div style="position:absolute;left:1608px;top:1189px;width:2px;height:64px;background:#d0d0d0"></div>
<div class="t" style="left:519.2px;top:1208.8px;font-size:26.5px;color:#2b2b2b;font-weight:normal;letter-spacing:0.73px;">WO-2025-010</div>
<div class="t" style="left:719.7px;top:1208.8px;font-size:26.5px;color:#2b2b2b;font-weight:normal;letter-spacing:0.28px;">Customer Sample Preparation</div>
<div class="t" style="left:1478.7px;top:1208.8px;font-size:26.5px;color:#2b2b2b;font-weight:normal;letter-spacing:0.00px;">DR</div>
<div class="t" style="left:1619.4px;top:1208.8px;font-size:26.5px;color:#2b2b2b;font-weight:normal;letter-spacing:1.51px;">2026-03-12</div>
<div style="position:absolute;left:1820px;top:264px;width:20px;height:1496px;background:linear-gradient(90deg,rgba(243,248,252,0) 0%,#f4f8fb 50%,rgba(243,248,252,0) 100%)"></div>
<div style="position:absolute;left:1827.40px;top:948.20px;width:4.6px;height:4.6px;border-radius:50%;background:#b0b4b8"></div><div style="position:absolute;left:1827.40px;top:954.60px;width:4.6px;height:4.6px;border-radius:50%;background:#b0b4b8"></div><div style="position:absolute;left:1827.40px;top:961.00px;width:4.6px;height:4.6px;border-radius:50%;background:#b0b4b8"></div>
<svg style="position:absolute;left:1825px;top:1009px;" width="7" height="12" viewBox="0 0 7 12"><polygon points="7,0 0,6 7,12" fill="#a9adb1"/></svg>
<div style="position:absolute;left:1827.40px;top:1068.70px;width:4.6px;height:4.6px;border-radius:50%;background:#b0b4b8"></div><div style="position:absolute;left:1827.40px;top:1075.10px;width:4.6px;height:4.6px;border-radius:50%;background:#b0b4b8"></div><div style="position:absolute;left:1827.40px;top:1081.50px;width:4.6px;height:4.6px;border-radius:50%;background:#b0b4b8"></div>
<div style="position:absolute;left:1854px;top:278px;width:1956px;height:1478px;box-sizing:border-box;border:2px solid #d6d6d6;border-radius:9px;background:#fff"></div>
<div style="position:absolute;left:1856px;top:344px;width:1952px;height:2px;background:#e2e2e2"></div>
<div style="position:absolute;left:1856px;top:340px;width:135px;height:4px;background:#1a8ae8"></div>
<div class="t" style="left:1881.3px;top:297.7px;font-size:26.5px;color:#1a8ae8;font-weight:normal;letter-spacing:0.48px;">Details</div>
<div class="t" style="left:2018.4px;top:297.7px;font-size:26.5px;color:#666;font-weight:normal;letter-spacing:0.25px;">Assignments</div>
<div class="t" style="left:2225.6px;top:297.7px;font-size:26.5px;color:#666;font-weight:normal;letter-spacing:0.23px;">Workload Chart</div>
<div class="t" style="left:1885.3px;top:379.2px;font-size:26.5px;color:#333;font-weight:bold;letter-spacing:0.43px;">Document No:</div>
<div class="t" style="left:2078.9px;top:379.2px;font-size:26.5px;color:#2b2b2b;font-weight:normal;letter-spacing:1.05px;">WO-2025-007</div>
<div class="t" style="left:1885.3px;top:425.2px;font-size:26.5px;color:#333;font-weight:bold;letter-spacing:1.04px;">Name:</div>
<div class="t" style="left:1976.7px;top:425.2px;font-size:26.5px;color:#2b2b2b;font-weight:normal;letter-spacing:0.46px;">Color Matching for Top Coat</div>
<div class="t" style="left:1885.3px;top:471.2px;font-size:26.5px;color:#333;font-weight:bold;letter-spacing:0.51px;">Description:</div>
<div class="t" style="left:2051.1px;top:471.2px;font-size:26.5px;color:#2b2b2b;font-weight:normal;letter-spacing:0.54px;">Match top coat color to customer RAL 9010 specification</div>
<div class="t" style="left:1886.2px;top:517.2px;font-size:26.5px;color:#333;font-weight:bold;letter-spacing:0.71px;">Status:</div>
<div class="t" style="left:1986.4px;top:517.2px;font-size:26.5px;color:#2b2b2b;font-weight:normal;letter-spacing:-1.55px;">DR</div>
<div class="t" style="left:1885.3px;top:563.2px;font-size:26.5px;color:#333;font-weight:bold;letter-spacing:0.66px;">Priority:</div>
<div class="t" style="left:1998.7px;top:563.2px;font-size:26.5px;color:#2b2b2b;font-weight:normal;letter-spacing:0.00px;">5</div>
<div class="t" style="left:1885.3px;top:609.2px;font-size:26.5px;color:#333;font-weight:bold;letter-spacing:0.28px;">Requested By:</div>
<div class="t" style="left:2080.6px;top:609.2px;font-size:26.5px;color:#2b2b2b;font-weight:normal;letter-spacing:0.20px;">SuperUser</div>
<div class="t" style="left:1886.2px;top:655.2px;font-size:26.5px;color:#333;font-weight:bold;letter-spacing:0.72px;">Start Date:</div>
<div class="t" style="left:2033.9px;top:655.2px;font-size:26.5px;color:#2b2b2b;font-weight:normal;letter-spacing:1.52px;">2026-03-14</div>
<div class="t" style="left:1885.3px;top:701.2px;font-size:26.5px;color:#333;font-weight:bold;letter-spacing:0.30px;">Finish Date:</div>
<div class="t" style="left:1885.3px;top:747.2px;font-size:26.5px;color:#333;font-weight:bold;letter-spacing:0.38px;">Estimated Hours:</div>
<div class="t" style="left:2115.9px;top:747.2px;font-size:26.5px;color:#2b2b2b;font-weight:normal;letter-spacing:0.29px;">16.00</div>
<div class="t" style="left:1886.3px;top:793.2px;font-size:26.5px;color:#333;font-weight:bold;letter-spacing:0.20px;">Actual Hours:</div>
<div class="t" style="left:2069.5px;top:793.2px;font-size:26.5px;color:#2b2b2b;font-weight:normal;letter-spacing:0.88px;">0.00</div>
<div style="position:absolute;left:481px;top:1718px;width:3351px;height:78px;background:linear-gradient(180deg,rgba(0,0,0,0) 0%,rgba(0,0,0,.03) 45%,rgba(0,0,0,.10) 100%)"></div>
<div style="position:absolute;left:0px;top:1715px;width:481px;height:81px;background:linear-gradient(180deg,rgba(30,50,70,0) 0%,rgba(30,50,70,.025) 45%,rgba(30,50,70,.10) 100%);-webkit-mask-image:linear-gradient(90deg,transparent 0px,rgba(0,0,0,.45) 70px,#000 170px);mask-image:linear-gradient(90deg,transparent 0px,rgba(0,0,0,.45) 70px,#000 170px)"></div>
<svg style="position:absolute;left:0px;top:1780px;" width="16" height="16" viewBox="0 0 16 16"><path d="M0,0 Q0,16 16,16 L0,16 Z" fill="#000"/></svg>
<svg style="position:absolute;left:3814px;top:1778px;" width="18" height="18" viewBox="0 0 18 18"><path d="M18,0 Q18,18 0,18 L18,18 Z" fill="#000"/></svg>
<svg style="position:absolute;left:3629px;top:1715px;" width="143" height="75" viewBox="0 0 143 75"><path d="M13,1.5 L128,1.5 Q140,1.5 140,13.5 L140,44 Q140,56 128,56 L85,56 L72,71 Q71,72 70,71 L57,56 L13,56 Q1.5,56 1.5,44 L1.5,13.5 Q1.5,1.5 13,1.5 Z" fill="#6d6f74" stroke="#151515" stroke-width="2.2"/></svg>
<svg style="position:absolute;left:3650px;top:1725px;" width="100" height="40" viewBox="0 0 2576 1030"><g fill="none" stroke="#fff" stroke-width="54" stroke-linecap="butt"><path d="M370,180 L370,660"/><path d="M240,385 L480,385"/><path d="M240,720 L470,650"/><path d="M630,195 L690,265"/><path d="M490,310 L860,310"/><path d="M560,420 L600,690"/><path d="M800,400 L730,740"/><path d="M470,770 L870,770"/><path d="M1070,180 L1070,660"/><path d="M960,385 L1160,385"/><path d="M950,700 L1180,640"/><path d="M1190,220 L1500,220 L1430,390"/><path d="M1290,220 Q1270,580 1130,800"/><path d="M1300,420 L1540,420 Q1450,660 1270,790"/><path d="M1350,570 Q1450,710 1560,780"/><path d="M1790,180 L1790,800"/><path d="M1680,335 L1880,335"/><path d="M1790,400 Q1740,520 1675,620"/><path d="M1810,440 L1880,560"/><path d="M1900,225 L2250,225 L2090,330"/><path d="M2110,300 L2180,360"/><path d="M1950,800 L1950,400 L2270,400 L2270,790 L2200,790"/><path d="M1950,520 L2270,520"/><path d="M1950,645 L2270,645"/><path d="M2110,400 L2110,800"/></g></svg>
</body></html>
